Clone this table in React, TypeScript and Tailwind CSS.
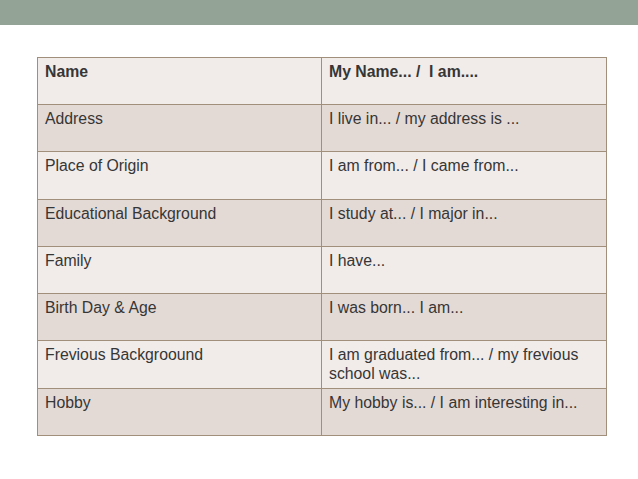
import React from 'react';

interface Row {
  label: string;
  phrase: string;
}

const rows: Row[] = [
  { label: 'Address', phrase: 'I live in... / my address is ...' },
  { label: 'Place of Origin', phrase: 'I am from... / I came from...' },
  { label: 'Educational Background', phrase: 'I study at... / I major in...' },
  { label: 'Family', phrase: 'I have...' },
  { label: 'Birth Day & Age', phrase: 'I was born... I am...' },
  { label: 'Frevious Backgroound', phrase: 'I am graduated from... / my frevious school was...' },
  { label: 'Hobby', phrase: 'My hobby is... / I am interesting in...' },
];

const App: React.FC = () => {
  return (
    <div className="w-[638px] h-[479px] bg-white font-['Liberation_Sans',Arial,sans-serif] text-[15.8px] text-[#363636] overflow-hidden">
      <div className="h-[25px] bg-[#93a396]" />
      <div className="pl-[37px] pt-[32px]">
        <table className="w-[569px] border-collapse table-fixed">
          <colgroup>
            <col className="w-[284px]" />
            <col className="w-[285px]" />
          </colgroup>
          <thead>
            <tr className="h-[47px] bg-[#f1ecea]">
              <th className="border border-[#a18f7c] align-top text-left font-bold px-[7px] pt-[4px] leading-[19px]">Name</th>
              <th className="border border-[#a18f7c] align-top text-left font-bold px-[7px] pt-[4px] leading-[19px]">
                My Name... / &nbsp;I am....
              </th>
            </tr>
          </thead>
          <tbody>
            {rows.map((row, i) => (
              <tr key={row.label} className={`h-[47.3px] ${i % 2 === 0 ? 'bg-[#e4dad5]' : 'bg-[#f1ecea]'}`}>
                <td className="border border-[#a18f7c] align-top px-[7px] pt-[4px] leading-[19px]">{row.label}</td>
                <td className="border border-[#a18f7c] align-top px-[7px] pt-[4px] leading-[19px]">{row.phrase}</td>
              </tr>
            ))}
          </tbody>
        </table>
      </div>
    </div>
  );
};

export default App;
